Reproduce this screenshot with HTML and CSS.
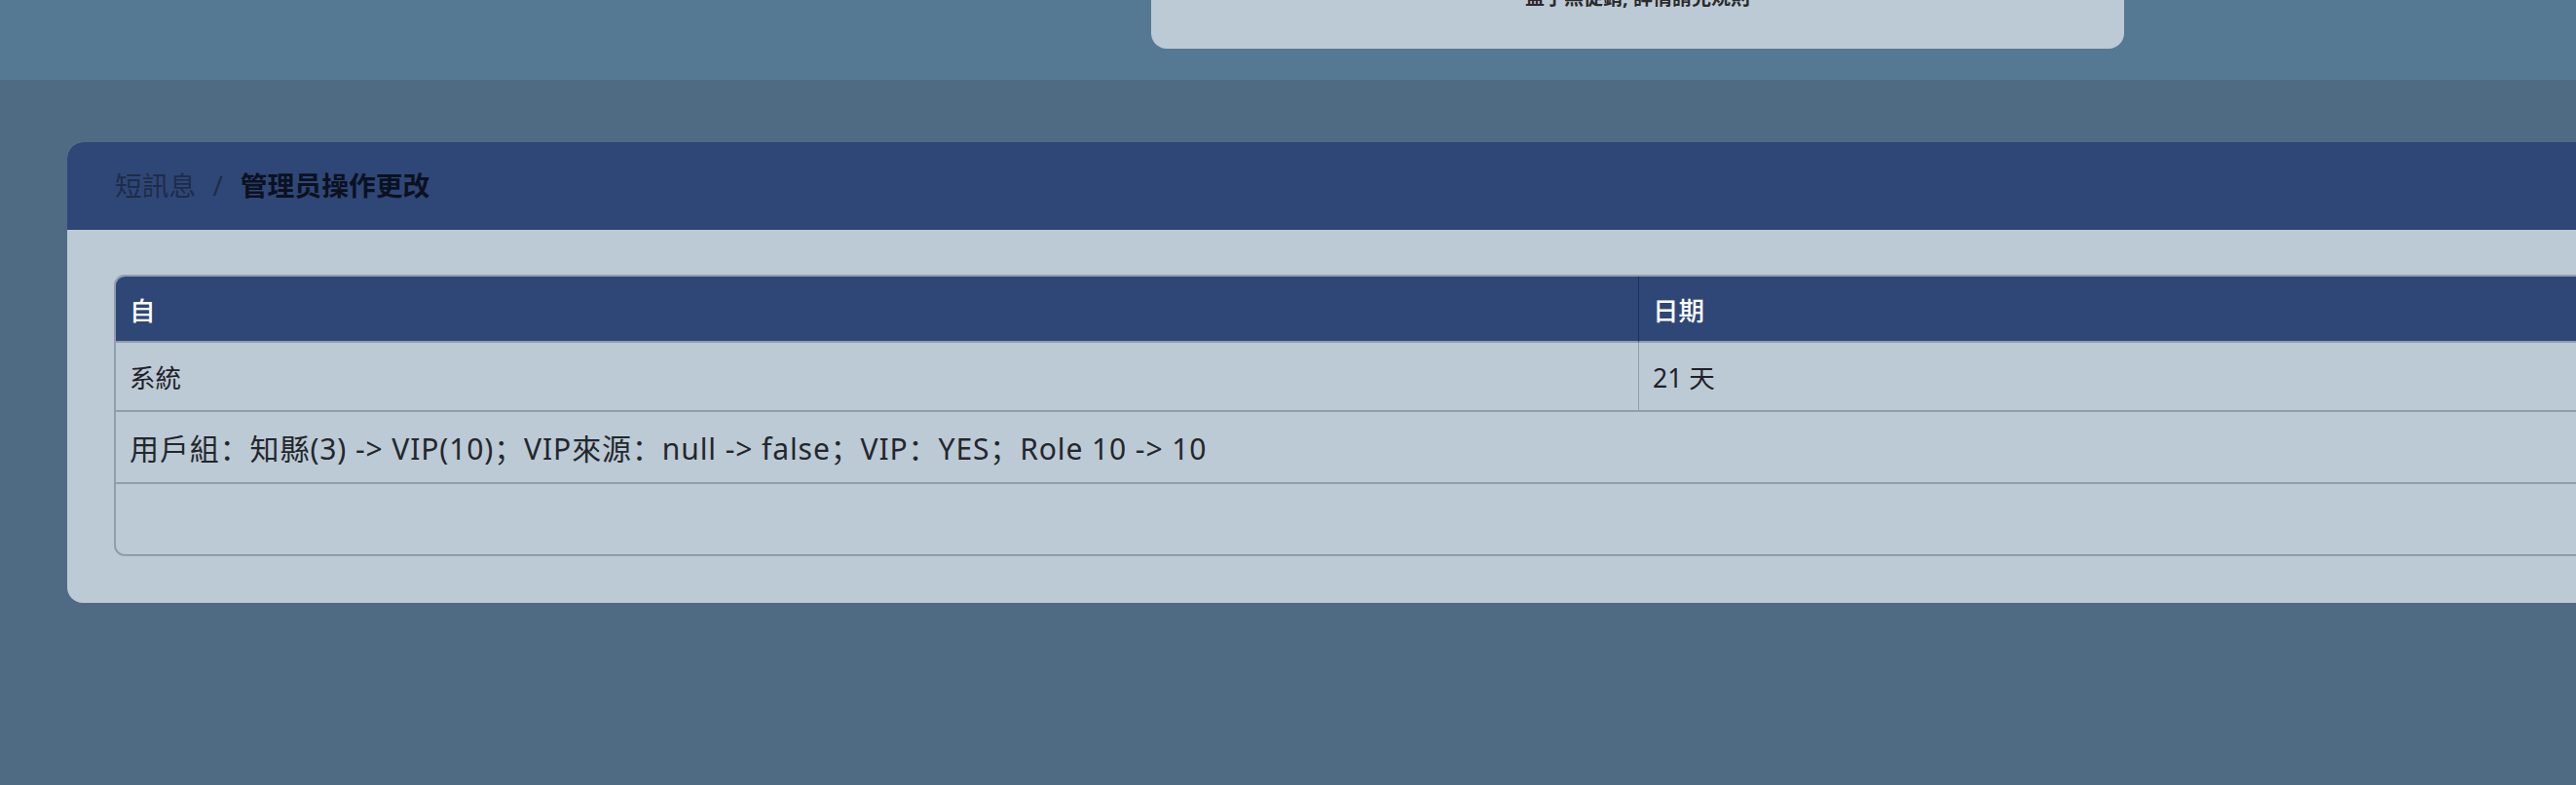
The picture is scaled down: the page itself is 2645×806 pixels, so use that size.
FILE: index.html
```html
<!DOCTYPE html>
<html lang="zh-CN">
<head>
<meta charset="utf-8">
<title>管理员操作更改</title>
<link rel="stylesheet" href="styles.css">
</head>
<body>
<header class="topbar">
  <div class="notice">
    <p class="notice-text">盖子無促銷, 詳情請見規則</p>
  </div>
</header>
<main class="main">
  <section class="card">
    <div class="card-header">
      <nav class="breadcrumb">
        <span class="crumb">短訊息</span>
        <span class="sep">/</span>
        <span class="crumb active">管理员操作更改</span>
      </nav>
    </div>
    <div class="card-body">
      <div class="table-wrap">
        <table class="msg-table">
          <thead>
            <tr>
              <th class="col-from">自</th>
              <th class="col-date">日期</th>
            </tr>
          </thead>
          <tbody>
            <tr class="row-meta">
              <td class="col-from">系統</td>
              <td class="col-date">21 天</td>
            </tr>
            <tr class="row-msg">
              <td colspan="2">用戶組：知縣(3) -&gt; VIP(10)；VIP來源：null -&gt; false；VIP：YES；Role 10 -&gt; 10</td>
            </tr>
            <tr class="row-empty">
              <td colspan="2"></td>
            </tr>
          </tbody>
        </table>
      </div>
    </div>
  </section>
</main>
</body>
</html>
```
FILE: styles.css
```css
html, body {
  margin: 0;
  padding: 0;
}
body {
  width: 2645px;
  height: 806px;
  overflow: hidden;
  background: #4e6b83;
  font-family: "Noto Sans", "Noto Sans CJK SC", sans-serif;
  color: #1e2126;
}
.topbar {
  position: relative;
  height: 82px;
  background: #567993;
}
.notice {
  position: absolute;
  left: 1182px;
  top: -100px;
  width: 999px;
  height: 150px;
  box-sizing: border-box;
  background: #bccad5;
  border-radius: 0 0 16px 16px;
  display: flex;
  align-items: flex-end;
  justify-content: center;
  padding-bottom: 40px;
}
.notice-text {
  margin: 0;
  font-size: 20px;
  line-height: 24px;
  font-weight: 700;
  color: #2b2b2b;
}
.main {
  padding: 64px 0 0 69px;
}
.card {
  width: 2700px;
  border-radius: 16px;
  overflow: hidden;
  background: #bccad5;
}
.card-header {
  height: 90px;
  background: #2e4777;
  display: flex;
  align-items: center;
  padding-left: 49px;
}
.breadcrumb {
  display: flex;
  align-items: center;
  font-size: 27.8px;
  line-height: 1.2;
}
.crumb {
  color: #1f2c48;
}
.crumb.active {
  color: #0b1120;
  font-weight: 700;
}
.sep {
  color: #1f2c48;
  padding: 0 18px 0 17px;
}
.card-body {
  padding: 46px 0 48px 48px;
}
.table-wrap {
  width: 2620px;
  border: 2px solid #8f9eaa;
  border-radius: 11px;
  overflow: hidden;
}
.msg-table {
  width: 100%;
  border-collapse: separate;
  border-spacing: 0;
  font-size: 26.5px;
}
.msg-table th,
.msg-table td {
  box-sizing: border-box;
  padding: 0 14px;
  text-align: left;
  vertical-align: middle;
  border-bottom: 2px solid #8f9eaa;
}
.msg-table th {
  height: 68px;
  background: #2e4777;
  color: #ffffff;
  font-weight: 500;
}
.msg-table th.col-from {
  width: 1564px;
  border-right: 1px solid #1e3059;
}
.row-meta td {
  height: 71px;
}
.row-meta td.col-from {
  border-right: 1px solid #8f9eaa;
}
.row-msg td {
  height: 74px;
  font-size: 30px;
  letter-spacing: 0.9px;
  color: #23272c;
}
.row-empty td {
  height: 72px;
  border-bottom: none;
}
```
